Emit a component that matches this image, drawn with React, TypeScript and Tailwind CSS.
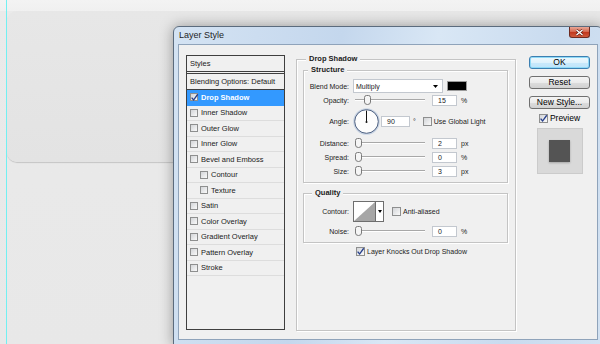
import React from 'react';

type Effect = { name: string; checked?: boolean; selected?: boolean; indent?: boolean };

const effects: Effect[] = [
    { name: 'Drop Shadow', checked: true, selected: true },
    { name: 'Inner Shadow' },
    { name: 'Outer Glow' },
    { name: 'Inner Glow' },
    { name: 'Bevel and Emboss' },
    { name: 'Contour', indent: true },
    { name: 'Texture', indent: true },
    { name: 'Satin' },
    { name: 'Color Overlay' },
    { name: 'Gradient Overlay' },
    { name: 'Pattern Overlay' },
    { name: 'Stroke' },
];

const CheckBox = ({ checked, big }: { checked?: boolean; big?: boolean }) => (
    <span
        className={`shrink-0 flex items-center justify-center border border-[#8e8f8f] bg-[linear-gradient(135deg,#d3d5d8,#fafafa)] ${
            big ? 'w-[9px] h-[9px]' : 'w-[8px] h-[8px]'
        }`}
    >
        {checked && (
            <svg viewBox="0 0 10 10" className="w-[9px] h-[9px] overflow-visible">
                <path d="M1.8 5.2 L4 7.8 L8.6 1.4" fill="none" stroke="#263f8c" strokeWidth="1.5" />
            </svg>
        )}
    </span>
);

const Slider = ({ pct }: { pct: number }) => (
    <div className="relative w-[74px] h-[12px] px-[2px] flex items-center">
        <div className="w-full h-[2px] bg-[#a8a8a8] border-b border-white" />
        {/* thumb position comes from the value */}
        <svg
            className="absolute top-[1px]"
            style={{ left: 2 + pct * 63 }}
            width="7"
            height="10"
            viewBox="0 0 7 10"
        >
            <path
                d="M0.5 2.5 Q0.5 0.5 2.5 0.5 H4.5 Q6.5 0.5 6.5 2.5 V7 Q6.5 9.5 3.5 9.5 Q0.5 9.5 0.5 7 Z"
                fill="#f5f5f5"
                stroke="#7b7b7b"
            />
        </svg>
    </div>
);

const Field = ({ value, className }: { value: string; className: string }) => (
    <div className={`h-[11px] bg-white border border-[#c3c8cf] pl-[5px] flex items-center ${className}`}>
        {value}
    </div>
);

const SliderRow = ({ label, value, unit, pct }: { label: string; value: string; unit: string; pct: number }) => (
    <div className="flex items-center h-[14px]">
        <span className="w-[45px] text-right">{label}</span>
        <div className="ml-[4px]">
            <Slider pct={pct} />
        </div>
        <Field value={value} className="ml-[5px] w-[25px]" />
        <span className="ml-[4px]">{unit}</span>
    </div>
);

const GroupTitle = ({ text, indent }: { text: string; indent: string }) => (
    <div className={`-mt-[6px] h-[10px] leading-[10px] w-fit px-[3px] bg-[#f0f0f0] font-bold text-[7.5px] ${indent}`}>
        {text}
    </div>
);

const groupBox = 'border border-[#c4c4c4] shadow-[1px_1px_0_#fff,inset_1px_1px_0_#fff]';

const StyleList = () => (
    <div className="w-[99px] h-[275px] shrink-0 border border-[#3f3f3f] bg-[#f0f0f0] text-[7.5px] text-[#1b1b1b] leading-none">
        <div className="h-[18px] pl-[3px] flex items-center border-b-[3px] border-double border-[#3f3f3f]">
            Styles
        </div>
        <div className="h-[16px] pl-[3px] flex items-center border-b border-[#3f3f3f]">
            Blending Options: Default
        </div>
        {effects.map((fx) => (
            <div
                key={fx.name}
                className={`h-[15.5px] flex items-center gap-[3px] border-b ${
                    fx.indent ? 'pl-[13px]' : 'pl-[3px]'
                } ${
                    fx.selected
                        ? 'bg-[#3399ff] border-[#3399ff] text-white font-bold'
                        : 'border-[#dddddd]'
                }`}
            >
                <CheckBox checked={fx.checked} />
                <span>{fx.name}</span>
            </div>
        ))}
    </div>
);

const DropShadowPanel = () => (
    <div className={`ml-[11px] mt-[4px] w-[220px] h-[272px] shrink-0 px-[6px] ${groupBox} text-[7px] text-[#1b1b1b] leading-none`}>
        <GroupTitle text="Drop Shadow" indent="ml-[3px]" />

        {/* Structure */}
        <div className={`mt-[6px] w-[205px] h-[113px] ${groupBox}`}>
            <GroupTitle text="Structure" indent="ml-[4px]" />
            <div className="mt-[4px] flex items-center h-[14px]">
                <span className="w-[45px] text-right">Blend Mode:</span>
                <div className="ml-[4px] w-[90px] h-[14px] bg-white border border-[#c3c8cf] pl-[2px] pr-[4px] flex items-center justify-between">
                    <span>Multiply</span>
                    <svg width="5" height="3" viewBox="0 0 5 3">
                        <path d="M0 0 H5 L2.5 3 Z" fill="#000" />
                    </svg>
                </div>
                <div className="ml-[4px] w-[20px] h-[10px] bg-black border border-[#9a9a9a]" />
            </div>
            <SliderRow label="Opacity:" value="15" unit="%" pct={0.15} />
            <div className="flex items-center h-[29px]">
                <span className="w-[45px] text-right">Angle:</span>
                <svg className="ml-[4px]" width="27" height="27" viewBox="0 0 27 27">
                    <circle cx="13.5" cy="13.5" r="12.5" fill="#fdfdfd" stroke="#c9d4e3" strokeWidth="1.6" />
                    <circle cx="13.5" cy="13.5" r="11.8" fill="none" stroke="#4f6282" strokeWidth="1" />
                    <line x1="13.5" y1="13.5" x2="13.5" y2="2.6" stroke="#111" strokeWidth="1" />
                    <circle cx="13.5" cy="14" r="1" fill="#111" />
                </svg>
                <Field value="90" className="ml-[1px] w-[29px]" />
                <span className="ml-[3px]">°</span>
                <span className="ml-[7px]">
                    <CheckBox big />
                </span>
                <span className="ml-[2px]">Use Global Light</span>
            </div>
            <SliderRow label="Distance:" value="2" unit="px" pct={0} />
            <SliderRow label="Spread:" value="0" unit="%" pct={0} />
            <SliderRow label="Size:" value="3" unit="px" pct={0} />
        </div>

        {/* Quality */}
        <div className={`mt-[10px] w-[205px] h-[50px] ${groupBox}`}>
            <GroupTitle text="Quality" indent="ml-[8px]" />
            <div className="mt-[3px] flex items-center h-[21px]">
                <span className="w-[45px] text-right">Contour:</span>
                <div className="ml-[4px] flex h-[21px] border border-[#6e6e6e] bg-white">
                    <svg width="21" height="19" viewBox="0 0 21 19" className="border-r border-[#6e6e6e] box-content">
                        <rect width="21" height="19" fill="#fff" />
                        <path d="M0 19 L21 0 V19 Z" fill="#a6a6a6" />
                    </svg>
                    <div className="w-[7px] flex items-center justify-center">
                        <svg width="4" height="3" viewBox="0 0 4 3">
                            <path d="M0 0 H4 L2 3 Z" fill="#000" />
                        </svg>
                    </div>
                </div>
                <span className="ml-[8px]">
                    <CheckBox big />
                </span>
                <span className="ml-[2px]">Anti-aliased</span>
            </div>
            <div className="mt-[2px]">
                <SliderRow label="Noise:" value="0" unit="%" pct={0} />
            </div>
        </div>

        <div className="mt-[2px] h-[12px] pl-[53px] flex items-center gap-[2px]">
            <CheckBox checked big />
            <span>Layer Knocks Out Drop Shadow</span>
        </div>
    </div>
);

const button =
    'h-[13px] rounded-[3px] border text-[8.5px] leading-none text-black flex items-center justify-center';

const SideButtons = () => (
    <div className="ml-[13px] mt-[1px] w-[61px] shrink-0 flex flex-col">
        <button
            className={`${button} border-[#3c7fb1] shadow-[inset_0_0_0_1px_#8fdaf7] bg-[linear-gradient(#eef8fd,#dff2fc_50%,#c9e9fb_51%,#bfe4fa)]`}
        >
            OK
        </button>
        <button
            className={`${button} mt-[7px] border-[#707070] bg-[linear-gradient(#f4f4f4,#ebebeb_50%,#dddddd_51%,#d1d1d1)]`}
        >
            Reset
        </button>
        <button
            className={`${button} mt-[7px] border-[#707070] bg-[linear-gradient(#f4f4f4,#ebebeb_50%,#dddddd_51%,#d1d1d1)]`}
        >
            New Style...
        </button>
        <div className="mt-[5px] h-[9px] flex items-center justify-center gap-[2px] text-[8.5px] leading-none text-black">
            <CheckBox checked big />
            <span>Preview</span>
        </div>
        <div className="mt-[5px] self-center w-[46px] h-[46px] bg-[#d9d9d9] border border-[#cbcbcb] flex items-center justify-center">
            <div className="w-[21px] h-[22px] bg-[#545454] shadow-[0_1px_2px_rgba(0,0,0,0.25)]" />
        </div>
    </div>
);

const App: React.FC = () => {
    return (
        <div className="relative w-[600px] h-[344px] overflow-hidden bg-[linear-gradient(#f3f3f3_0,#f0f0f0_11px,#eaeaea_11px,#e8e8e8)] font-['Liberation_Sans',Arial,sans-serif]">
            {/* rounded panel on the canvas */}
            <div className="absolute left-[7px] top-[11px] w-[700px] h-[151px] rounded-[10px] bg-[linear-gradient(#e7e7e7,#e3e3e3)] shadow-[0_1px_1px_rgba(0,0,0,0.16)]" />
            {/* guide */}
            <div className="absolute left-[6px] top-0 bottom-0 w-px bg-[#72f0f2]" />

            {/* dialog window */}
            <div className="absolute left-[173px] top-[26px] w-[430px] h-[320px] flex flex-col rounded-t-[6px] border border-[#5b6b7d] bg-[linear-gradient(100deg,#d4e3f3,#c4d7ed_35%,#d9e7f5_55%,#c9dbef_80%,#d3e2f2)] shadow-[0_0_14px_rgba(0,0,0,0.35)]">
                <div className="h-[17px] shrink-0 flex items-center pl-[5px]">
                    <span className="text-[9px] text-[#1e1e1e] leading-none">Layer Style</span>
                    <div className="ml-auto mr-[12px] self-start w-[21px] h-[11px] rounded-b-[3px] border border-t-0 border-[#6d2a20] bg-[linear-gradient(#e9a796,#d66a52_45%,#c2391f_55%,#cf5a3c)] flex items-center justify-center">
                        <svg width="9" height="7" viewBox="0 0 9 7">
                            <path d="M1.5 1 L7.5 6 M7.5 1 L1.5 6" stroke="#5a1a12" strokeWidth="2.6" />
                            <path d="M1.5 1 L7.5 6 M7.5 1 L1.5 6" stroke="#fff" strokeWidth="1.4" />
                        </svg>
                    </div>
                </div>
                <div className="mx-[4px] flex-1 flex items-start border border-[#8fa3ba] bg-[#f0f0f0] pl-[7px] pt-[10px]">
                    <StyleList />
                    <DropShadowPanel />
                    <SideButtons />
                </div>
                <div className="h-[5px] shrink-0" />
            </div>
        </div>
    );
};

export default App;
